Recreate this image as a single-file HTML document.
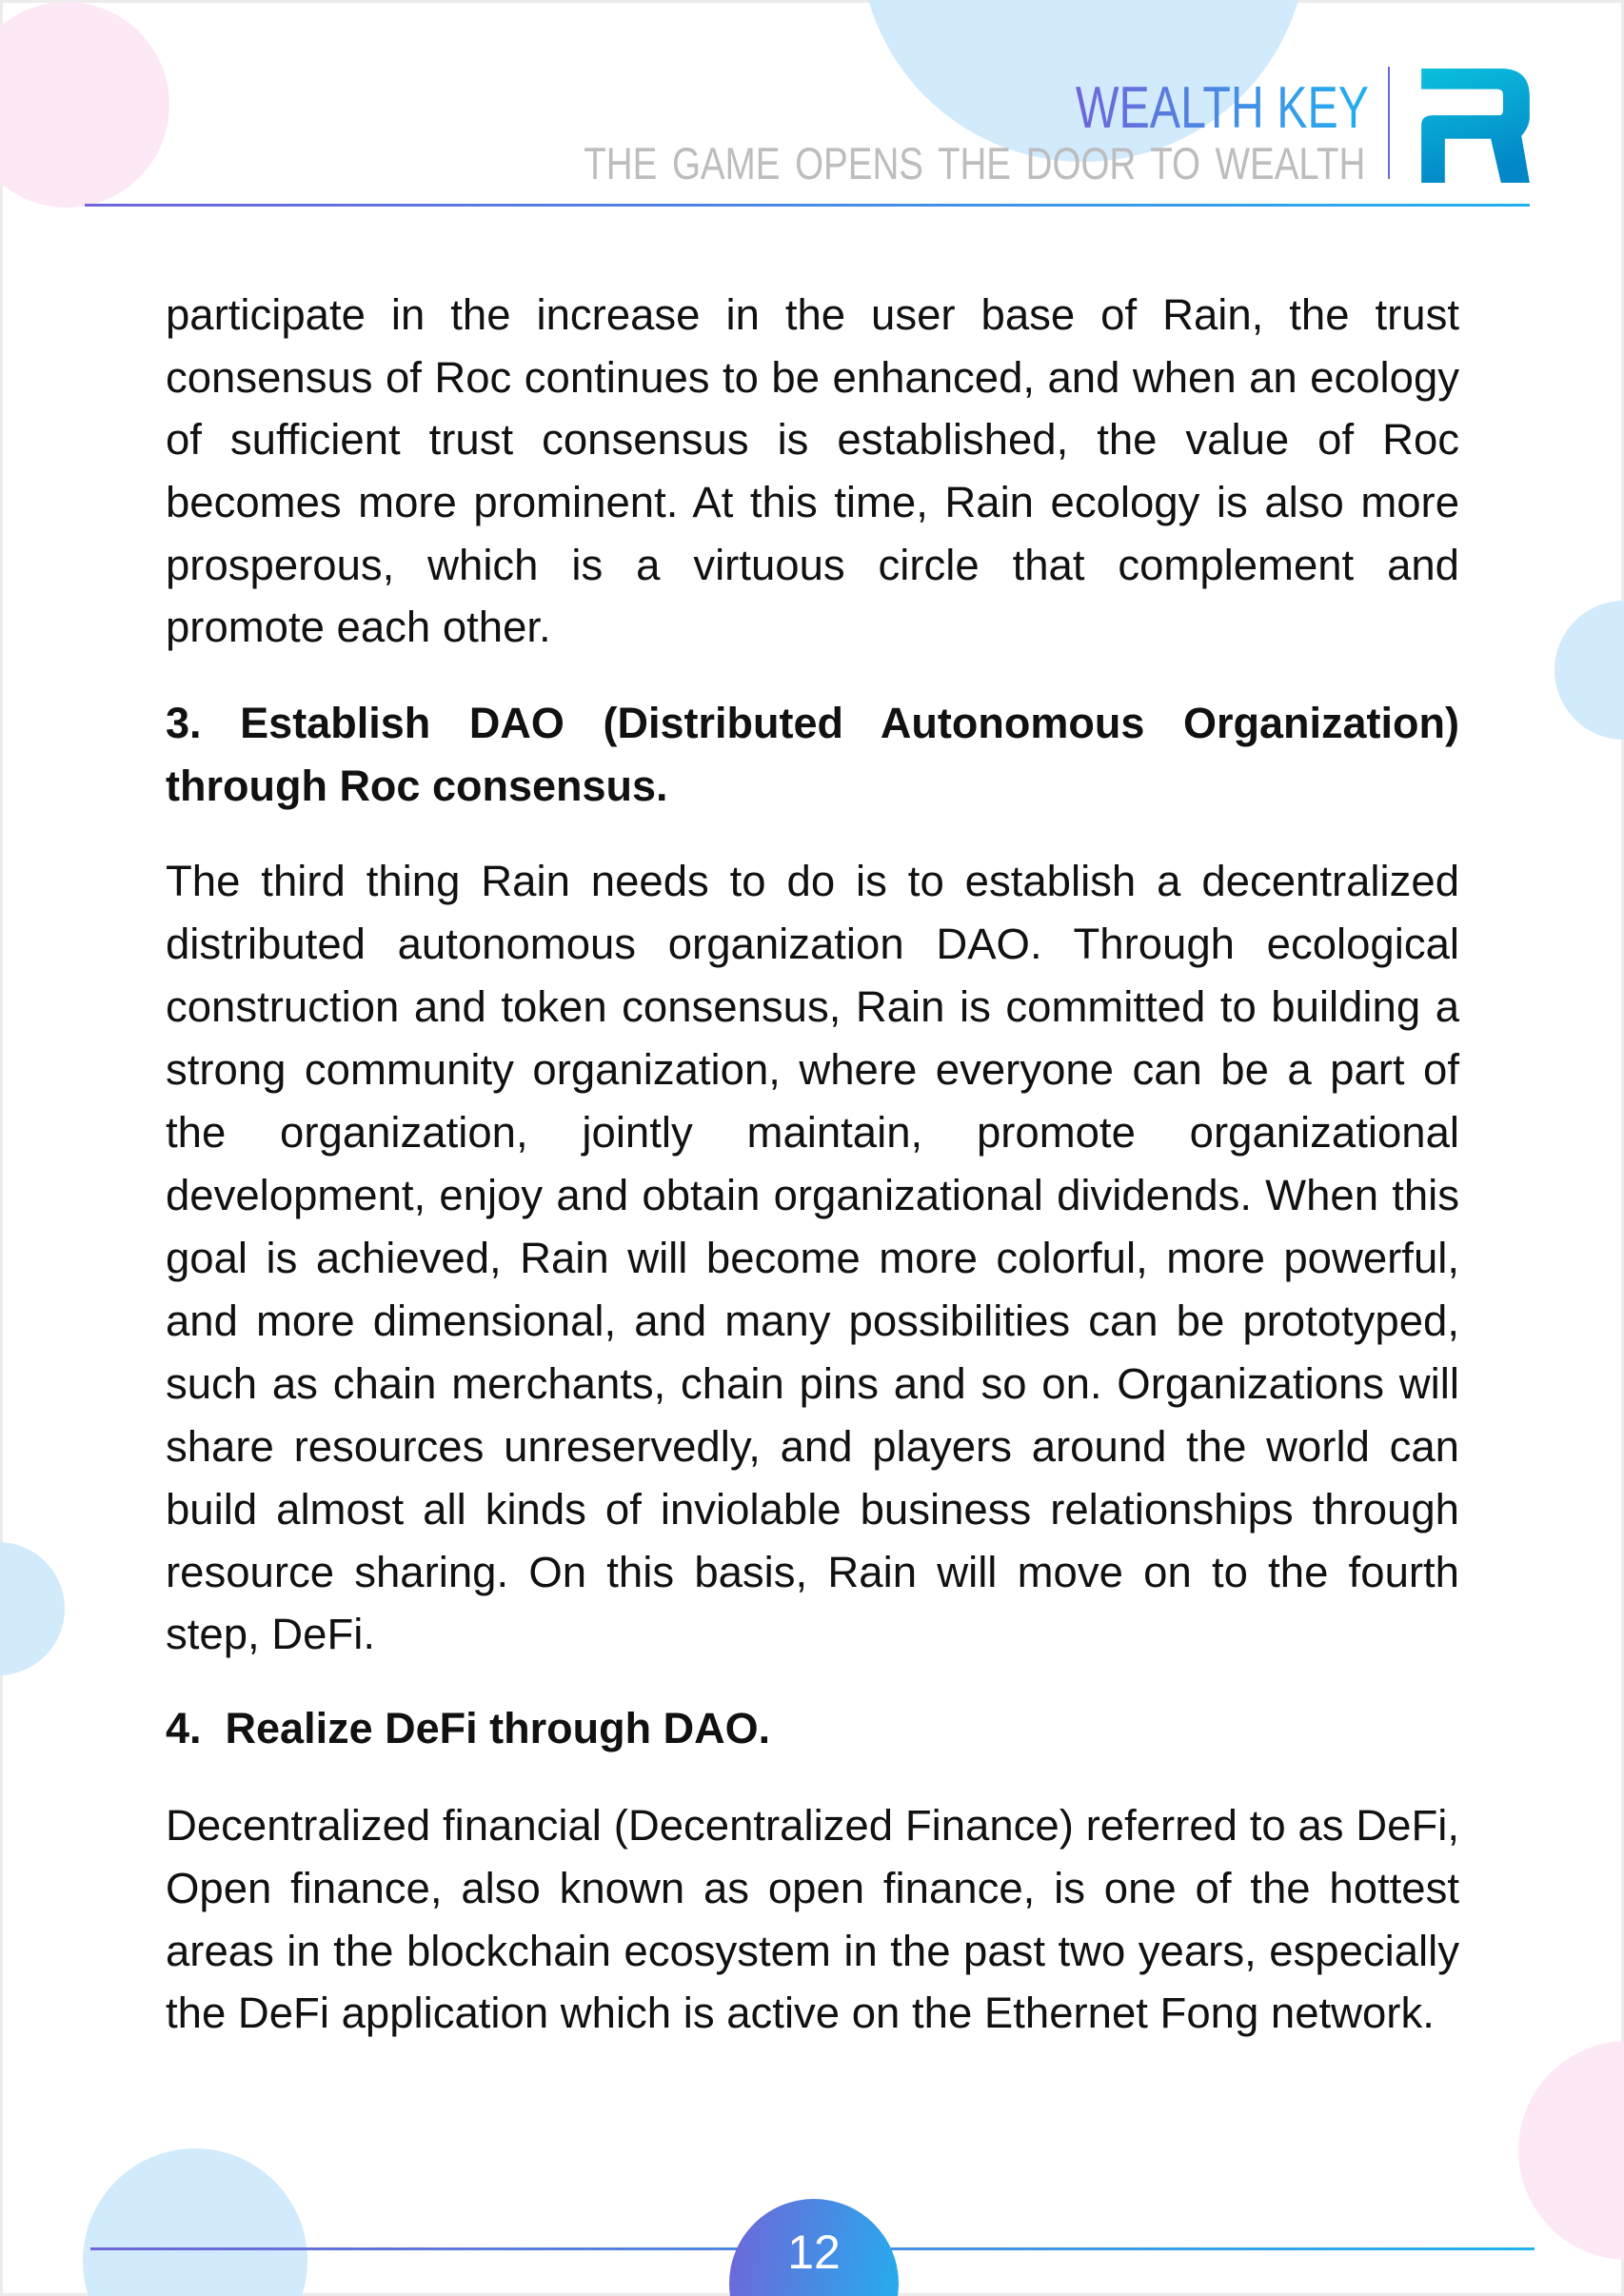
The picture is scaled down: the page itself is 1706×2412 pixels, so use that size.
<!DOCTYPE html>
<html><head><meta charset="utf-8"><style>
html,body{margin:0;padding:0;width:1706px;height:2412px;overflow:hidden}
body{background:#fff;font-family:"Liberation Sans",Arial,sans-serif;color:#111}
#w{position:relative;width:1706px;height:2412px;overflow:hidden}
.c{position:absolute;border-radius:50%}
.l{position:absolute;left:174px;width:1359px;font-size:45.5px;line-height:66px;height:66px;white-space:nowrap;text-align:justify;text-align-last:justify}
.l.e{text-align:left;text-align-last:left}
.b{font-weight:bold;font-size:45px}
</style></head><body><div id="w">
<div style="position:absolute;left:0;top:0;width:1706px;height:3px;background:#ececec"></div>
<div style="position:absolute;left:0;top:0;width:3px;height:2412px;background:#ececec"></div>
<div style="position:absolute;right:0;top:0;width:3px;height:2412px;background:#ececec"></div>
<div style="position:absolute;left:0;bottom:0;width:1706px;height:3px;background:#ececec"></div>
<div class="c" style="left:-38px;top:2px;width:216px;height:216px;background:#fde8f6"></div>
<div class="c" style="left:903px;top:-300px;width:470px;height:470px;background:#d1eafc"></div>
<div class="c" style="left:1633px;top:631px;width:146px;height:146px;background:#d1eafc"></div>
<div class="c" style="left:-72px;top:1620px;width:140px;height:140px;background:#d1eafc"></div>
<div class="c" style="left:87px;top:2257px;width:236px;height:236px;background:#d1eafc"></div>
<div class="c" style="left:1595px;top:2144px;width:230px;height:230px;background:#fde8f6"></div>
<div style="position:absolute;left:89px;top:214px;width:1518px;height:3px;background:linear-gradient(90deg,#7065d8,#21b0ef)"></div>
<div style="position:absolute;right:268px;top:80px;font-size:62px;line-height:68px;transform:scaleX(0.78);transform-origin:right;background:linear-gradient(90deg,#7065d8,#21b0ef);-webkit-background-clip:text;color:transparent;white-space:nowrap">WEALTH KEY</div>
<div style="position:absolute;right:272px;top:145px;font-size:47px;line-height:54px;color:#bdbdbd;transform:scaleX(0.82);transform-origin:right;white-space:nowrap;word-spacing:6px">THE GAME OPENS THE DOOR TO WEALTH</div>
<div style="position:absolute;left:1458px;top:70px;width:2px;height:118px;background:#6a6ad8"></div>
<svg style="position:absolute;left:1491px;top:72px" width="118" height="120" viewBox="0 0 110 122" preserveAspectRatio="none">
<defs><linearGradient id="g" x1="0" y1="0" x2="0.3" y2="1"><stop offset="0" stop-color="#0bc0dd"/><stop offset="1" stop-color="#0288c8"/></linearGradient></defs>
<path d="M2 0 H80 Q108 0 108 30 V52 Q108 62 100 72 L108 122 H80 L70 75 H25 V122 H2 V60 Q2 50 14 50 H78 Q82 50 82 44 V28 Q82 22 76 22 H2 Z" fill="url(#g)"/>
</svg>
<div style="position:absolute;left:95px;top:2361px;width:1517px;height:3px;background:linear-gradient(90deg,#7065d8,#21b0ef)"></div>
<div class="c" style="left:766px;top:2310px;width:178px;height:178px;background:linear-gradient(100deg,#7065d8,#21b0ef)"></div>
<div style="position:absolute;left:766px;width:178px;top:2338px;text-align:center;color:#fff;font-size:50px;line-height:56px">12</div>

<div class="l" style="top:298px">participate in the increase in the user base of Rain, the trust</div>
<div class="l" style="top:364px">consensus of Roc continues to be enhanced, and when an ecology</div>
<div class="l" style="top:429px">of sufficient trust consensus is established, the value of Roc</div>
<div class="l" style="top:495px">becomes more prominent. At this time, Rain ecology is also more</div>
<div class="l" style="top:561px">prosperous, which is a virtuous circle that complement and</div>
<div class="l e" style="top:626px">promote each other.</div>

<div class="l b" style="top:727px">3. Establish DAO (Distributed Autonomous Organization)</div>
<div class="l b e" style="top:793px">through Roc consensus.</div>

<div class="l" style="top:893px">The third thing Rain needs to do is to establish a decentralized</div>
<div class="l" style="top:959px">distributed autonomous organization DAO. Through ecological</div>
<div class="l" style="top:1025px">construction and token consensus, Rain is committed to building a</div>
<div class="l" style="top:1091px">strong community organization, where everyone can be a part of</div>
<div class="l" style="top:1157px">the organization, jointly maintain, promote organizational</div>
<div class="l" style="top:1223px">development, enjoy and obtain organizational dividends. When this</div>
<div class="l" style="top:1289px">goal is achieved, Rain will become more colorful, more powerful,</div>
<div class="l" style="top:1355px">and more dimensional, and many possibilities can be prototyped,</div>
<div class="l" style="top:1421px">such as chain merchants, chain pins and so on. Organizations will</div>
<div class="l" style="top:1487px">share resources unreservedly, and players around the world can</div>
<div class="l" style="top:1553px">build almost all kinds of inviolable business relationships through</div>
<div class="l" style="top:1619px">resource sharing. On this basis, Rain will move on to the fourth</div>
<div class="l e" style="top:1684px">step, DeFi.</div>

<div class="l b e" style="top:1783px">4.&nbsp; Realize DeFi through DAO.</div>

<div class="l" style="top:1885px">Decentralized financial (Decentralized Finance) referred to as DeFi,</div>
<div class="l" style="top:1951px">Open finance, also known as open finance, is one of the hottest</div>
<div class="l" style="top:2017px">areas in the blockchain ecosystem in the past two years, especially</div>
<div class="l e" style="top:2082px">the DeFi application which is active on the Ethernet Fong network.</div>
</div></body></html>
